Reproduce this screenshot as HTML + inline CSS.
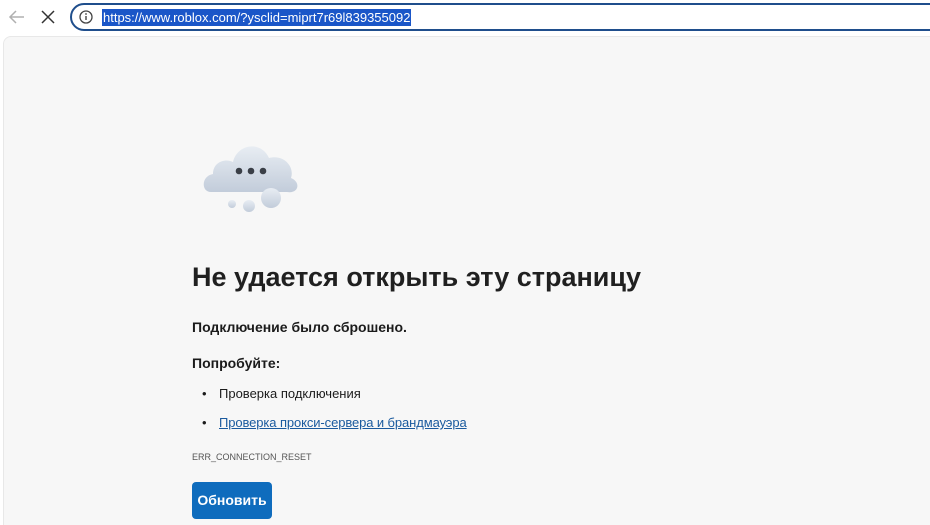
<!DOCTYPE html>
<html><head><meta charset="utf-8"><style>
body{margin:0;width:930px;height:525px;overflow:hidden;background:#fff;font-family:"Liberation Sans","DejaVu Sans",sans-serif;position:relative}
.page{position:absolute;left:3px;top:36px;right:0;bottom:0;background:#f7f7f7;border-top-left-radius:8px;border:1px solid #e8e8e8;border-right:none;border-bottom:none}
.addr{position:absolute;left:70px;top:3px;width:880px;height:28px;border:2px solid #1f4e8c;border-radius:16px;background:#fff;box-sizing:border-box}
.url{position:absolute;left:102px;top:9px;background:#1a56c8;color:#fff;font-size:13px;line-height:17px;padding:0 1px}
.t{position:absolute;color:#1b1b1b}
</style></head><body>
<svg style="position:absolute;left:7px;top:8px" width="20" height="18"><path d="M17 9H3M9 3L3 9l6 6" stroke="#b0b0b0" stroke-width="1.5" fill="none"/></svg>
<svg style="position:absolute;left:41px;top:10px" width="14" height="14"><path d="M1 1L13 13M13 1L1 13" stroke="#333" stroke-width="1.5"/></svg>
<div class="addr"></div>
<svg style="position:absolute;left:78px;top:9px" width="16" height="16"><circle cx="8" cy="8" r="6" stroke="#444" stroke-width="1.3" fill="none"/><path d="M8 7v4" stroke="#444" stroke-width="1.4"/><circle cx="8" cy="5" r="0.9" fill="#444"/></svg>
<div class="url">https://www.roblox.com/?ysclid=miprt7r69l839355092</div>
<div class="page"></div>
<svg style="position:absolute;left:201px;top:138px" width="100" height="78">
<defs><linearGradient id="g" x1="0" y1="0" x2="0" y2="1"><stop offset="0" stop-color="#e8edf3"/><stop offset="1" stop-color="#c2ccda"/></linearGradient></defs>
<path d="M10 54 C0 54 0 38 12 36 C12 24 24 20 32 24 C36 6 60 2 68 20 C82 16 94 28 90 40 C100 44 98 56 86 54 Z" fill="url(#g)"/>
<circle cx="38" cy="33" r="3.3" fill="#3a3f47"/><circle cx="50" cy="33" r="3.3" fill="#3a3f47"/><circle cx="62" cy="33" r="3.3" fill="#3a3f47"/>
<circle cx="70" cy="60" r="10" fill="url(#g)"/><circle cx="48" cy="68" r="6" fill="url(#g)"/><circle cx="31" cy="66" r="4" fill="url(#g)"/>
</svg>
<div class="t" style="left:192px;top:262px;font-size:27px;font-weight:bold;color:#202020">Не удается открыть эту страницу</div>
<div class="t" style="left:192px;top:319px;font-size:14px;font-weight:bold">Подключение было сброшено.</div>
<div class="t" style="left:192px;top:355px;font-size:14px;font-weight:bold">Попробуйте:</div>
<div class="t" style="left:202px;top:386px;font-size:13px">•</div>
<div class="t" style="left:219px;top:386px;font-size:13px">Проверка подключения</div>
<div class="t" style="left:202px;top:415px;font-size:13px">•</div>
<div class="t" style="left:219px;top:415px;font-size:13px;color:#1a5a9e;text-decoration:underline;letter-spacing:-0.1px">Проверка прокси-сервера и брандмауэра</div>
<div class="t" style="left:192px;top:452px;font-size:9px;color:#555">ERR_CONNECTION_RESET</div>
<div style="position:absolute;left:192px;top:482px;width:80px;height:37px;background:#0f6cbd;border-radius:4px;color:#fff;font-size:14px;font-weight:bold;text-align:center;line-height:37px">Обновить</div>
</body></html>
